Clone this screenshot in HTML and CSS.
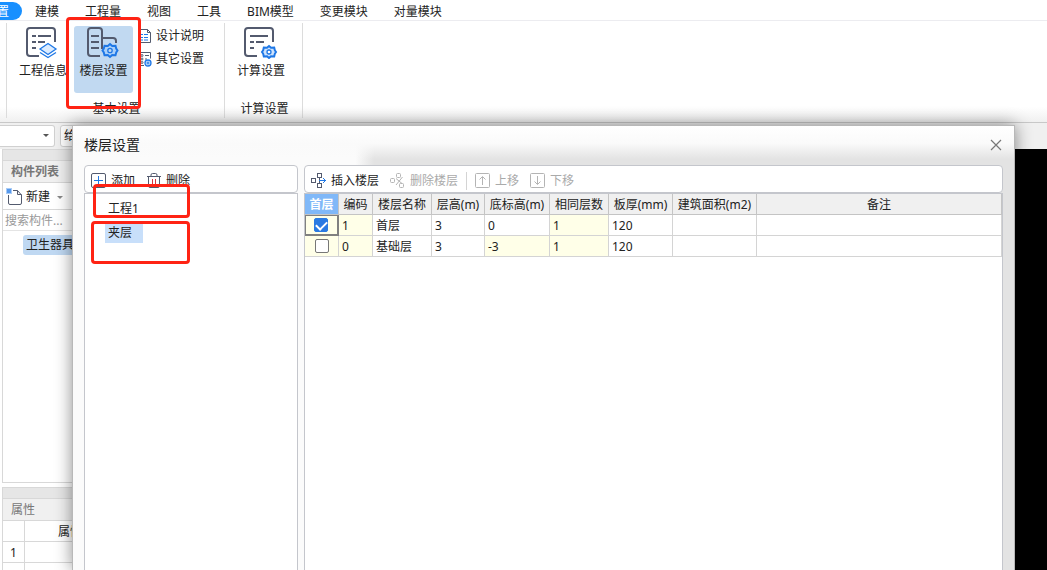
FILE: index.html
```html
<!DOCTYPE html>
<html lang="zh-CN">
<head>
<meta charset="utf-8">
<title>楼层设置</title>
<link rel="stylesheet" href="styles.css">
</head>
<body>
<div class="app">
  <nav class="tabs">
    <button class="tab tab-active">置</button>
    <button class="tab">建模</button>
    <button class="tab">工程量</button>
    <button class="tab">视图</button>
    <button class="tab">工具</button>
    <button class="tab">BIM模型</button>
    <button class="tab">变更模块</button>
    <button class="tab">对量模块</button>
  </nav>

  <div class="ribbon">
    <section class="group group-basic">
      <div class="group-items">
        <button class="big">
          <svg width="34" height="32" viewBox="0 0 34 32" fill="none" stroke="#535a6e" stroke-width="2">
            <path d="M13 29H4a3 3 0 0 1-3-3V4a3 3 0 0 1 3-3h22a3 3 0 0 1 3 3v11"/>
            <path d="M6 9h4M12 9h13M6 15h4M12 15h7M6 21h4"/>
            <path d="M14 22l8-5.500 8 5.500-8 5.500z" fill="#dcecff" stroke="#1f78e6" stroke-width="1.300"/>
            <path d="M14 25.500l8 5 8-5" stroke="#1f78e6" stroke-width="1.300"/>
          </svg>
          <span>工程信息</span>
        </button>
        <button class="big big-on">
          <svg width="34" height="32" viewBox="0 0 34 32" fill="none" stroke="#535a6e" stroke-width="2">
            <path d="M13 29H4a3 3 0 0 1-3-3V4a3 3 0 0 1 3-3h8a3 3 0 0 1 3 3v18M15 11h11a3 3 0 0 1 3 3v2"/>
            <path d="M4 9h8M4 15h8M4 21h8"/>
            <path d="M23 17l2.200 2 3.300-.3.700 2.800 1.300 2-1.300 2-.7 2.800-3.300-.3-2.200 2-2.200-2-3.300.3-.7-2.800-1.300-2 1.300-2 .7-2.800 3.300.3z" fill="#a9d0fa" stroke="#1f78e6"/>
            <circle cx="23" cy="23.500" r="2.200" fill="#c1d9f1" stroke="#1f78e6" stroke-width="1.300"/>
          </svg>
          <span>楼层设置</span>
        </button>
        <div class="small-list">
          <button class="small">
            <svg width="14" height="16" viewBox="0 0 14 16" fill="none" stroke="#535a6e">
              <path d="M1.500 1.500h8l3 3v10h-11zM9.500 1.500v3h3"/><path d="M3 6.500h2M6 6.500h4M3 9.500h2M6 9.500h4M3 12h2M6 12h4" stroke="#1f78e6"/>
            </svg>设计说明
          </button>
          <button class="small">
            <svg width="14" height="16" viewBox="0 0 14 16" fill="none" stroke="#535a6e">
              <path d="M6 14.500H1.500v-13h11v6M7 4.500h4M7 8h2"/><circle cx="4" cy="4.500" r="1"/><circle cx="4" cy="8" r="1"/><circle cx="4" cy="11.500" r="1"/>
              <circle cx="10" cy="12" r="3" fill="#cfe3fd" stroke="#1f78e6" stroke-width="1.300"/><circle cx="10" cy="12" r="1" stroke="#1f78e6"/>
            </svg>其它设置
          </button>
        </div>
      </div>
      <div class="group-name">基本设置</div>
    </section>
    <section class="group group-calc">
      <div class="group-items">
        <button class="big">
          <svg width="34" height="32" viewBox="0 0 34 32" fill="none" stroke="#535a6e" stroke-width="2">
            <path d="M13 29H4a3 3 0 0 1-3-3V4a3 3 0 0 1 3-3h22a3 3 0 0 1 3 3v11"/>
            <path d="M6 9h18M6 15h4M12 15h8M6 21h4"/>
            <path d="M25 19l2 1.700 3.200-.2.600 2.700 1.200 1.800-1.200 1.800-.6 2.700-3.200-.2-2 1.700-2-1.700-3.200.2-.6-2.700-1.200-1.800 1.200-1.800.6-2.700 3.200.2z" fill="#cfe3fd" stroke="#1f78e6"/>
            <circle cx="25" cy="25" r="2" fill="#fff" stroke="#1f78e6" stroke-width="1.300"/>
          </svg>
          <span>计算设置</span>
        </button>
      </div>
      <div class="group-name">计算设置</div>
    </section>
  </div>

  <div class="toolbar">
    <div class="select-wrap">
      <select class="picker" aria-label="楼层"><option></option></select>
      <span class="caret"></span>
    </div>
    <button class="tool">给</button>
  </div>

  <div class="work">
    <aside class="dock">
      <section class="pane pane-list">
        <div class="grip"></div>
        <h2 class="pane-title">构件列表</h2>
        <div class="pane-tools">
          <button class="new">
            <svg width="17" height="18" viewBox="0 0 17 18" fill="none" stroke="#535a6e">
              <path d="M2.500 7v8a1.500 1.500 0 0 0 1.500 1.500h10a1.500 1.500 0 0 0 1.500-1.500V7l-4-4.500H7M11.500 2.500v4h4"/>
              <path d="M.5 1h1M2.500 1h1M4.500 1h1M1.500 2h1M3.500 2h1M.5 3h1M2.500 3h1M4.500 3h1M1.500 4h1M3.500 4h1M.5 5h1M2.500 5h1M4.500 5h1" stroke="#1f78e6" stroke-width="1.300"/>
            </svg>新建<span class="caret"></span>
          </button>
        </div>
        <input class="search" type="text" placeholder="搜索构件..." aria-label="搜索构件">
        <div class="parts"><button class="part">卫生器具</button></div>
      </section>
      <section class="pane pane-props">
        <div class="grip"></div>
        <h2 class="pane-title">属性</h2>
        <table class="props">
          <tr><th class="num"></th><th>属性</th></tr>
          <tr><td class="num">1</td><td></td></tr>
          <tr><td class="num"></td><td></td></tr>
        </table>
      </section>
    </aside>
    <main class="canvas"></main>
  </div>
</div>

<div class="dialog" role="dialog" aria-labelledby="dlg-title">
  <header class="dlg-head">
    <h1 id="dlg-title">楼层设置</h1>
    <button class="close" aria-label="关闭">
      <svg width="12" height="12" viewBox="0 0 12 12" stroke="#777" stroke-width="1.200"><path d="M1 1l10 10M11 1L1 11"/></svg>
    </button>
  </header>
  <div class="dlg-body">
    <section class="side">
      <div class="bar">
        <button class="act">
          <svg width="15" height="15" viewBox="0 0 15 15" fill="none" stroke="#535a6e"><rect x=".5" y=".5" width="14" height="14" rx="1.500"/><path d="M7.500 3v9M3 7.500h9" stroke="#1f78e6"/></svg>添加
        </button>
        <button class="act">
          <svg width="14" height="15" viewBox="0 0 14 15" fill="none" stroke="#535a6e"><path d="M0 3.500h14M4 3V2A1.500 1.500 0 0 1 5.500.5h3A1.500 1.500 0 0 1 10 2v1M1.500 4v9A1.500 1.500 0 0 0 3 14.500h8a1.500 1.500 0 0 0 1.500-1.500V4"/><path d="M5.500 6v6M8.500 6v6" stroke="#d8343f"/></svg>删除
        </button>
      </div>
      <div class="box tree">
        <button class="node">工程1</button>
        <button class="node node-on">夹层</button>
      </div>
    </section>
    <section class="main">
      <div class="bar">
        <button class="act">
          <svg width="15" height="16" viewBox="0 0 15 16" fill="none" stroke="#535a6e"><rect x=".5" y="5.500" width="4" height="4"/><rect x="6.500" y=".5" width="4" height="4"/><rect x="6.500" y="10.500" width="4" height="4"/><path d="M8.500 4.500v6"/><path d="M8 7.500h7M12 5l2.500 2.500-2.500 2.500" stroke="#1f78e6"/></svg>插入楼层
        </button>
        <button class="act" disabled>
          <svg width="15" height="16" viewBox="0 0 15 16" fill="none" stroke="#b4b4b4"><rect x=".5" y="5.500" width="4" height="4" rx="1"/><rect x="6.500" y=".5" width="4" height="4" rx="1"/><rect x="9.500" y="10.500" width="4" height="4" rx="1"/><path d="M6 5.500l6 5M12.500 4L6 12"/></svg>删除楼层
        </button>
        <span class="split"></span>
        <button class="act" disabled>
          <svg width="15" height="15" viewBox="0 0 15 15" fill="none" stroke="#b4b4b4"><rect x=".5" y=".5" width="14" height="14" rx="1"/><path d="M7.500 12V4M4.500 6.500l3-3 3 3"/></svg>上移
        </button>
        <button class="act" disabled>
          <svg width="15" height="15" viewBox="0 0 15 15" fill="none" stroke="#b4b4b4"><rect x=".5" y=".5" width="14" height="14" rx="1"/><path d="M7.500 3v8M4.500 8.500l3 3 3-3"/></svg>下移
        </button>
      </div>
      <div class="box">
        <table class="floors">
          <colgroup><col class="c34"><col class="c34"><col class="c59"><col class="c53"><col class="c65"><col class="c59"><col class="c64"><col class="c84"><col></colgroup>
          <thead><tr><th class="first">首层</th><th>编码</th><th>楼层名称</th><th>层高(m)</th><th>底标高(m)</th><th>相同层数</th><th>板厚(mm)</th><th>建筑面积(m2)</th><th>备注</th></tr></thead>
          <tbody>
            <tr><td class="lock check current"><input type="checkbox" checked aria-label="首层"></td><td class="lock">1</td><td>首层</td><td>3</td><td>0</td><td class="lock">1</td><td>120</td><td></td><td></td></tr>
            <tr><td class="lock check"><input type="checkbox" aria-label="基础层"></td><td class="lock">0</td><td>基础层</td><td>3</td><td class="lock">-3</td><td class="lock">1</td><td>120</td><td></td><td></td></tr>
          </tbody>
        </table>
      </div>
    </section>
  </div>
</div>

<div class="mark mark-ribbon"></div>
<div class="mark mark-project"></div>
<div class="mark mark-floor"></div>
</body>
</html>
```

FILE: styles.css
```css
* { box-sizing: border-box; }
body {
  margin: 0;
  height: 100vh;
  overflow: hidden;
  position: relative;
  background: #fff;
  color: #222;
  font: 12px/18px "Noto Sans", "Noto Sans CJK SC", sans-serif;
}
button, input, select { font: inherit; color: inherit; }
button { border: 0; padding: 0; background: none; white-space: nowrap; }
h1, h2 { margin: 0; font-weight: 400; }
svg { display: block; flex: none; }

.app { height: 100%; display: flex; flex-direction: column; }

/* Menu tabs */
.tabs { display: flex; height: 21px; margin-left: -3px; padding-top: 2px; border-bottom: 1px solid #ececf0; }
.tab { padding: 2px 13px 0; line-height: 16px; }
.tab-active { padding-left: 0; background: #1890ff; color: #fff; border-radius: 0 9px 9px 0; }

/* Ribbon */
.ribbon { display: flex; height: 102px; padding: 2px 0 4px 6px; border-bottom: 1px solid #c8c8c8; background: linear-gradient(#fff 85%, #f0f0f0); }
.group { display: flex; flex-direction: column; justify-content: space-between; border-right: 1px solid #dcdcdc; }
.group-basic { width: 219px; border-left: 1px solid #dcdcdc; padding-left: 7px; }
.group-calc { width: 78px; padding-left: 7px; }
.group-items { display: flex; padding-top: 3px; }
.group-name { padding-right: 5px; text-align: center; }
.big { width: 58px; height: 67px; padding-bottom: 12px; border-radius: 3px; display: flex; flex-direction: column; align-items: center; justify-content: center; gap: 3px; }
.big-on { width: 59px; background: #c1d9f1; margin-left: 2px; }
.small-list { display: flex; flex-direction: column; gap: 5px; padding: 1px 0 0 5px; }
.small { display: flex; align-items: center; gap: 4px; }

/* Toolbar */
.toolbar { display: flex; gap: 5px; height: 26px; padding: 2px 0; background: #f0f0f0; }
.select-wrap { position: relative; width: 55px; }
.picker { width: 100%; height: 22px; appearance: none; border: 1px solid #d0d0d0; border-left: 0; border-radius: 0 3px 3px 0; background: #fff; }
.caret { border: 3px solid transparent; border-top-color: #888; border-bottom: 0; }
.select-wrap .caret { position: absolute; right: 6px; top: 9px; border-top-color: #555; }
.tool { width: 120px; padding-left: 3px; text-align: left; background: #fff; border: 1px solid #d0d0d0; border-radius: 3px; }

/* Docked panes */
.work { flex: 1; display: flex; min-height: 0; }
.dock { width: 200px; padding-left: 2px; display: flex; flex-direction: column; gap: 4px; }
.pane { border: 1px solid #d8d8d8; }
.pane-list { flex: 1; display: flex; flex-direction: column; }
.grip { height: 11px; background: #e6e6e6; border-bottom: 1px solid #d8d8d8; }
.pane-title { height: 22px; padding: 2px 8px; font-size: 12px; line-height: 18px; color: #777; background: #f0f0f0; border-bottom: 1px solid #d8d8d8; }
.pane-list .pane-title { font-weight: 700; }
.pane-tools { height: 27px; padding: 5px 3px 0; border-bottom: 1px solid #d8d8d8; }
.new { display: flex; align-items: center; gap: 3px; }
.new .caret { margin-left: 4px; }
.search { height: 21px; padding: 1px 2px 0; border: 0; border-bottom: 1px solid #e4e4e4; outline: 0; }
.search::placeholder { color: #999; }
.parts { padding: 4px 0 0 20px; }
.part { width: 120px; height: 20px; padding-left: 3px; text-align: left; background: #bfd8f2; border-radius: 3px; }
.pane-props { height: 83px; border-bottom: 0; overflow: hidden; }
.props { width: 100%; border-collapse: separate; border-spacing: 0; table-layout: fixed; }
.props th, .props td { height: 21px; padding: 2px 0 0; line-height: 18px; border-right: 1px solid #d8d8d8; border-bottom: 1px solid #d8d8d8; }
.props th { padding-left: 33px; text-align: left; font-weight: 400; }
.props .num { width: 22px; padding-left: 0; text-align: center; }
.canvas { flex: 1; background: #000; }

/* Dialog */
.dialog {
  position: absolute;
  left: 72px; right: 32px; top: 125px; bottom: 0;
  display: flex;
  flex-direction: column;
  border: 1px solid #b8b8b8;
  border-bottom: 0;
  background: linear-gradient(90deg, #fbfbfb 30%, #e3e3e3 32%);
  box-shadow: 0 0 16px rgba(0, 0, 0, .45);
}
.dlg-head { display: flex; align-items: center; justify-content: space-between; height: 39px; padding: 0 12px 2px 11px; background: linear-gradient(#fff, #fafafa 45%, rgba(250, 250, 250, 0) 85%); }
.dlg-head h1 { font-size: 14px; line-height: 20px; }
.dlg-body { flex: 1; display: flex; gap: 6px; padding: 0 11px; min-height: 0; }
.side { width: 214px; display: flex; flex-direction: column; }
.main { flex: 1; display: flex; flex-direction: column; }
.bar { display: flex; align-items: center; gap: 12px; height: 28px; padding: 3px 6px 0; border: 1px solid #c4c6cc; border-radius: 4px; background: #fff; }
.main .bar { gap: 11px; }
.act { display: flex; align-items: center; gap: 5px; line-height: 20px; }
.act:disabled { color: #aaa; }
.split { width: 1px; height: 18px; background: #d4d4d4; margin: 0 -3px; }
.box { flex: 1; border: 1px solid #c4c6cc; border-bottom: 0; background: #fff; }
.tree { display: flex; flex-direction: column; align-items: flex-start; gap: 4px; padding: 5px 0 0 20px; }
.node { height: 20px; padding: 0 3px; }
.node-on { padding-right: 11px; background: #c8dffa; }

.floors { width: 100%; border-collapse: separate; border-spacing: 0; table-layout: fixed; }
.floors th, .floors td { height: 21px; padding: 1px 3px 0; line-height: 18px; border-right: 1px solid #d4d4d4; border-bottom: 1px solid #d4d4d4; }
.floors th { padding: 2px 0 0; font-weight: 400; text-align: center; white-space: nowrap; background: #f0f0f0; border-color: #c4c4c4; }
.floors .first { background: #80b8f8; color: #fff; font-weight: 700; }
.floors .lock { background: #ffffe8; }
.floors .check { padding: 0; text-align: center; }
.floors .current { border-right: 2px solid #808080; border-bottom: 2px solid #808080; box-shadow: inset 1px 1px 0 #808080; }
.check input { appearance: none; display: block; width: 14px; height: 14px; margin: 0 auto; border: 1px solid #777; border-radius: 2px; background: #fff; }
.check input:checked { border-color: #2a7ae2; background: #2a7ae2; }
.check input:checked::after { content: ""; display: block; width: 5px; height: 9px; margin: 0 auto; border: solid #fff; border-width: 0 2px 2px 0; transform: rotate(45deg); }
.c34 { width: 34px; } .c53 { width: 53px; } .c59 { width: 59px; }
.c64 { width: 64px; } .c65 { width: 65px; } .c84 { width: 84px; }

/* Red annotation frames */
.mark { position: absolute; border: 3px solid #ff2314; border-radius: 4px; pointer-events: none; }
.mark-ribbon { left: 66px; top: 17px; width: 75px; height: 92px; }
.mark-project { left: 93px; top: 184px; width: 97px; height: 34px; }
.mark-floor { left: 91px; top: 221px; width: 99px; height: 43px; }
```
